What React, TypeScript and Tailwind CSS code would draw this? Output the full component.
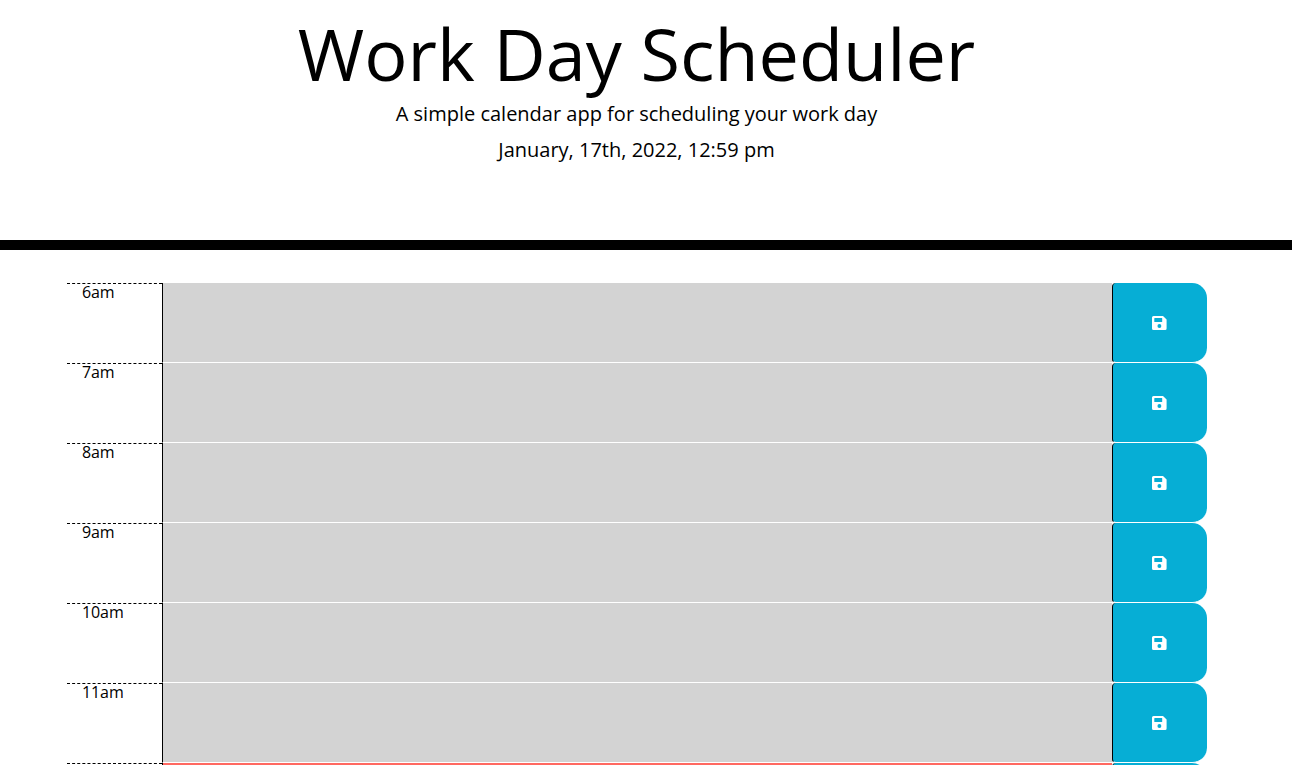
import React from "react";

const hours = ["6am", "7am", "8am", "9am", "10am", "11am"];

function SaveIcon() {
  return (
    <svg width="15" height="14" viewBox="0 0 15 14" fill="currentColor" aria-hidden="true">
      <path
        fillRule="evenodd"
        d="M1.5 0H11L14.6 3.4V12.5A1.5 1.5 0 0 1 13.1 14H1.5A1.5 1.5 0 0 1 0 12.5V1.5A1.5 1.5 0 0 1 1.5 0ZM2.8 2A.5.5 0 0 0 2.3 2.5V5.4A.5.5 0 0 0 2.8 5.9H9.7A.5.5 0 0 0 10.2 5.4V2.5A.5.5 0 0 0 9.7 2ZM7.4 8A1.95 1.95 0 1 0 7.4 11.9A1.95 1.95 0 1 0 7.4 8Z"
      />
    </svg>
  );
}

function TimeBlock({ label, tone }: { label?: string; tone: string }) {
  return (
    <div className="flex h-20 w-[1140px]">
      <div className="w-[95px] shrink-0 border-t border-dashed border-black pl-[15px] text-base leading-[17px] tracking-[-0.1px]">{label}</div>
      <div className={`w-[950px] shrink-0 border-b border-l border-b-white border-l-black ${tone}`} />
      <button className="flex h-20 w-[95px] shrink-0 items-center justify-center rounded-l-[4px] rounded-r-[15px] border-b border-l border-b-white border-l-black bg-[#06aed5] pr-px pt-px text-white">
        <SaveIcon />
      </button>
    </div>
  );
}

export default function App() {
  return (
    <div className="h-[765px] overflow-hidden bg-white font-['Open_Sans',sans-serif] text-black">
      <header className="h-[250px] border-b-[10px] border-black pr-[19px] pt-[10px] text-center">
        <h1 className="text-[72px] leading-[86px]">Work Day Scheduler</h1>
        <p className="text-[20px] leading-[36px]">A simple calendar app for scheduling your work day</p>
        <p className="text-[20px] leading-[36px]">January, 17th, 2022, 12:59 pm</p>
      </header>
      <main className="pl-[67px] pt-[33px]">
        {hours.map((h) => (
          <TimeBlock key={h} label={h} tone="bg-[#d3d3d3]" />
        ))}
        <TimeBlock tone="bg-[#ff6961]" />
      </main>
    </div>
  );
}
